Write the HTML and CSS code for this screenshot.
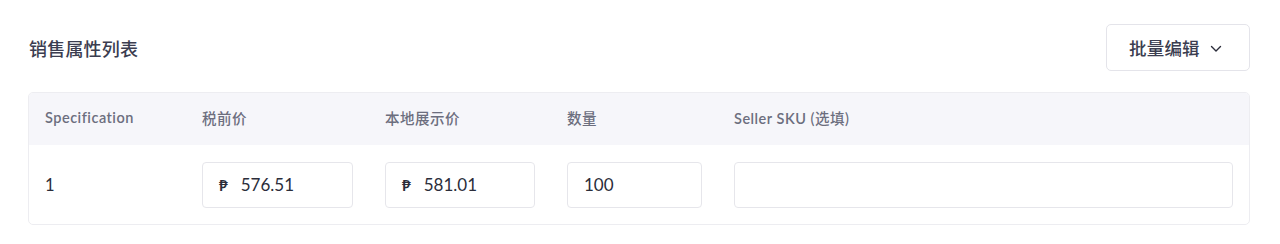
FILE: index.html
```html
<!DOCTYPE html>
<html lang="zh-CN">
<head>
    <meta charset="UTF-8">
    <title>销售属性列表</title>
    <link rel="stylesheet" href="styles.css">
</head>
<body>
    <div class="panel">
        <div class="panel-head">
            <h2 class="panel-title">销售属性列表</h2>
            <button class="batch-btn">批量编辑
                <svg class="chev" width="12" height="8" viewBox="0 0 12 8"><path d="M1.5 1.5 L6 6 L10.5 1.5" fill="none" stroke="#2b2d3a" stroke-width="1.4" stroke-linecap="round" stroke-linejoin="round"/></svg>
            </button>
        </div>

        <div class="sku-table">
            <div class="row head">
                <div class="cell">Specification</div>
                <div class="cell zh">税前价</div>
                <div class="cell zh">本地展示价</div>
                <div class="cell zh">数量</div>
                <div class="cell">Seller SKU <span class="zh">(选填)</span></div>
            </div>
            <div class="row">
                <div class="cell">1</div>
                <div class="cell"><div class="field"><span class="cur">₱</span>576.51</div></div>
                <div class="cell"><div class="field"><span class="cur">₱</span>581.01</div></div>
                <div class="cell"><div class="field">100</div></div>
                <div class="cell"><div class="field"></div></div>
            </div>
        </div>
    </div>
</body>
</html>
```

FILE: styles.css
```css
body
{
    margin: 0;
    background: #fff;
    font-family: Lato, "Noto Sans CJK SC", sans-serif;
    color: #2b2d3a;
}
.panel
{
    padding: 24px 30px 0 28px;
}
.panel-head
{
    display: flex;
    align-items: center;
    justify-content: space-between;
    height: 47px;
    margin-bottom: 21px;
}
.panel-title
{
    margin: 0 0 0 1px;
    font-size: 18px;
    font-weight: 500;
    letter-spacing: 0.2px;
    color: #3b3d50;
}
.batch-btn
{
    display: flex;
    align-items: center;
    gap: 10px;
    height: 47px;
    width: 144px;
    padding: 0 0 0 22px;
    background: #fff;
    border: 1px solid #e4e4ea;
    border-radius: 5px;
    font-family: inherit;
    font-size: 17.5px;
    font-weight: 500;
    letter-spacing: 0.2px;
    color: #3b3d50;
}
.chev { margin-top: 2px; }

.sku-table
{
    border: 1px solid #ededf1;
    border-radius: 5px;
    overflow: hidden;
}
.row
{
    display: grid;
    grid-template-columns: 157px 183px 182px 167px 1fr;
    align-items: center;
}
.row.head
{
    height: 52px;
    padding-bottom: 4px;
    box-sizing: border-box;
    background: #f6f6fa;
    font-size: 14.5px;
    font-weight: 600;
    letter-spacing: 0.5px;
    color: #6c6e7e;
}
.row.head .zh
{
    font-weight: 500;
}
.row:not(.head)
{
    height: 79px;
    font-size: 16.5px;
}
.cell
{
    padding: 0 16px;
}
.field
{
    display: flex;
    align-items: center;
    height: 44px;
    padding: 0 16px;
    border: 1px solid #e6e6eb;
    border-radius: 4px;
    font-size: 17px;
    color: #2b2d3a;
}
.cur
{
    margin-right: 13px;
    font-size: 15px;
    font-weight: 700;
}
```
